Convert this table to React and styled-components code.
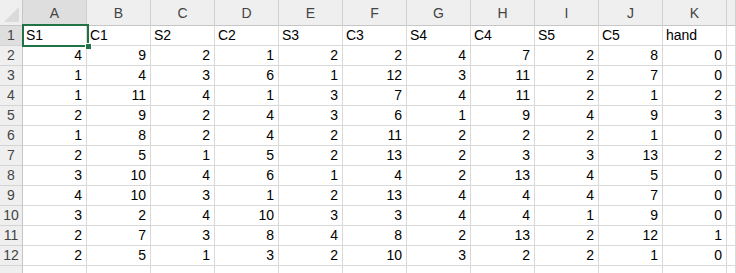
import React from "react";
import styled, { createGlobalStyle } from "styled-components";

const Global = createGlobalStyle`
  html, body { margin: 0; padding: 0; background: #fff; overflow: hidden; }
  #root { width: 736px; height: 273px; overflow: hidden; }
`;

const Sheet = styled.div`
  position: relative;
  width: 736px;
  height: 273px;
  overflow: hidden;
  font-family: "Liberation Sans", Arial, sans-serif;
`;

const Grid = styled.div`
  display: grid;
  grid-template-columns: 23px repeat(11, 64px) 1fr;
  grid-template-rows: 26px;
  grid-auto-rows: 20px;
`;

const Corner = styled.div`
  position: relative;
  background: #efefef;
  border-right: 1px solid #c6c6c6;
  border-bottom: 1px solid #c6c6c6;
  box-sizing: border-box;
  overflow: hidden;
  &::after {
    content: "";
    position: absolute;
    right: 3px;
    bottom: 3px;
    width: 0;
    height: 0;
    border-left: 15px solid transparent;
    border-bottom: 15px solid #dadada;
  }
`;

const ColHead = styled.div`
  box-sizing: border-box;
  background: ${(p) => (p.$sel ? "#dedede" : "#efefef")};
  border-right: 1px solid #d0d0d0;
  border-bottom: 1px solid #c6c6c6;
  color: #444;
  font-size: 14px;
  display: flex;
  align-items: center;
  justify-content: center;
  padding-top: 1px;
`;

const RowHead = styled.div`
  box-sizing: border-box;
  background: ${(p) => (p.$sel ? "#dedede" : "#efefef")};
  border-right: 1px solid #c6c6c6;
  border-bottom: 1px solid #d4d4d4;
  color: #444;
  font-size: 14px;
  display: flex;
  align-items: flex-end;
  justify-content: center;
  padding-bottom: 1px;
  line-height: 17px;
`;

const Cell = styled.div`
  box-sizing: border-box;
  border-right: 1px solid #d9d9d9;
  border-bottom: 1px solid #d9d9d9;
  font-size: 14px;
  color: #000;
  display: flex;
  align-items: flex-end;
  justify-content: ${(p) => (p.$num ? "flex-end" : "flex-start")};
  padding: 0 ${(p) => (p.$num ? "4px" : "0")} 1px ${(p) => (p.$num ? "0" : "3px")};
  line-height: 17px;
  white-space: nowrap;
  overflow: hidden;
`;

const Selection = styled.div`
  position: absolute;
  left: 22px;
  top: 24px;
  width: 67px;
  height: 23px;
  box-sizing: border-box;
  border: 2px solid #217346;
  pointer-events: none;
`;

const FillHandle = styled.div`
  position: absolute;
  left: 85px;
  top: 43px;
  width: 7px;
  height: 7px;
  box-sizing: border-box;
  background: #217346;
  border: 1px solid #fff;
`;

const cols = ["A", "B", "C", "D", "E", "F", "G", "H", "I", "J", "K"];
const headers = ["S1", "C1", "S2", "C2", "S3", "C3", "S4", "C4", "S5", "C5", "hand"];
const data = [
  [4, 9, 2, 1, 2, 2, 4, 7, 2, 8, 0],
  [1, 4, 3, 6, 1, 12, 3, 11, 2, 7, 0],
  [1, 11, 4, 1, 3, 7, 4, 11, 2, 1, 2],
  [2, 9, 2, 4, 3, 6, 1, 9, 4, 9, 3],
  [1, 8, 2, 4, 2, 11, 2, 2, 2, 1, 0],
  [2, 5, 1, 5, 2, 13, 2, 3, 3, 13, 2],
  [3, 10, 4, 6, 1, 4, 2, 13, 4, 5, 0],
  [4, 10, 3, 1, 2, 13, 4, 4, 4, 7, 0],
  [3, 2, 4, 10, 3, 3, 4, 4, 1, 9, 0],
  [2, 7, 3, 8, 4, 8, 2, 13, 2, 12, 1],
  [2, 5, 1, 3, 2, 10, 3, 2, 2, 1, 0],
];

export default function App() {
  return (
    <Sheet>
      <Global />
      <Grid>
        <Corner />
        {cols.map((c) => (
          <ColHead key={c} $sel={c === "A"}>{c}</ColHead>
        ))}
        <ColHead />

        <RowHead $sel>1</RowHead>
        {headers.map((h) => (
          <Cell key={h}>{h}</Cell>
        ))}
        <Cell />

        {data.map((row, i) => (
          <React.Fragment key={i}>
            <RowHead>{i + 2}</RowHead>
            {row.map((v, j) => (
              <Cell key={j} $num>{v}</Cell>
            ))}
            <Cell />
          </React.Fragment>
        ))}

        <RowHead />
        {cols.map((c) => (
          <Cell key={c} />
        ))}
        <Cell />
      </Grid>
      <Selection />
      <FillHandle />
    </Sheet>
  );
}
